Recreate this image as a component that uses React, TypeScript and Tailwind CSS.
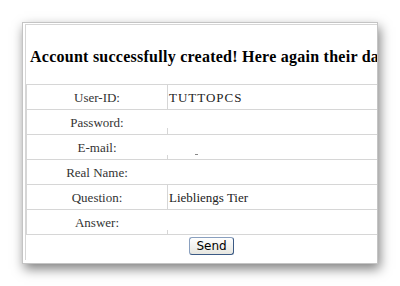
import React from "react";

const serif = { fontFamily: '"Liberation Serif", "Times New Roman", serif' };

type Row = { label: string; value?: string; seg: "full" | "bottom" | "none"; segH?: number; dot?: boolean };

const rows: Row[] = [
  { label: "User-ID:", value: "TUTTOPCS", seg: "full" },
  { label: "Password:", seg: "bottom", segH: 6 },
  { label: "E-mail:", seg: "bottom", segH: 4, dot: true },
  { label: "Real Name:", seg: "none" },
  { label: "Question:", value: "Liebliengs Tier", seg: "full" },
  { label: "Answer:", seg: "bottom", segH: 4 },
];

export default function App() {
  return (
    <div className="w-[400px] h-[286px] bg-white pl-[22px] pt-[22px]" style={serif}>
      <div className="w-[356px] h-[242px] border border-[#c4c4c4] bg-white shadow-[2px_5px_11px_rgba(0,0,0,0.5)] pl-[2px] pt-[1px] overflow-hidden">
        <div className="w-[420px] border-l border-t border-[#d6d6d6] pl-[1px]">
          <div className="h-[59px] flex items-center pl-[3px] pt-[4px] whitespace-nowrap overflow-hidden text-[16px] tracking-[0.25px] font-bold text-black">
            Account successfully created! Here again their data
          </div>
          <div className="border-l border-[#d6d6d6] -ml-[1px]">
            {rows.map((r) => (
              <div key={r.label} className="h-[25px] border-t border-[#d6d6d6] flex text-[13px] text-[#333]">
                <div className="w-[140px] flex items-center justify-center pt-[1px]">{r.label}</div>
                <div className="relative flex-1 flex items-center pl-[2px] pt-[1px]">
                  {r.seg === "full" && <div className="absolute left-0 top-0 bottom-0 w-px bg-[#d6d6d6]" />}
                  {r.seg === "bottom" && (
                    <div className="absolute left-0 bottom-0 w-px bg-[#d6d6d6]" style={{ height: r.segH }} />
                  )}
                  {r.dot && <div className="absolute left-[28px] top-[19px] w-[3px] h-px bg-[#888]" />}
                  <span className={r.value === "TUTTOPCS" ? "text-[#222] tracking-[1px]" : "text-[#222]"}>{r.value}</span>
                </div>
              </div>
            ))}
          </div>
          <div className="border-t border-[#d6d6d6] -ml-[1px] h-[26px] flex items-start pl-[163px] pt-[2px]">
            <button
              className="w-[45px] h-[18px] rounded-[3px] border border-[#3b5a85] border-t-[#8aa0bf] border-l-[#8aa0bf] bg-gradient-to-b from-white to-[#e6e6e0] text-[12px] leading-none text-black"
              style={{ fontFamily: '"DejaVu Sans", Tahoma, sans-serif' }}
            >
              Send
            </button>
          </div>
        </div>
      </div>
    </div>
  );
}
